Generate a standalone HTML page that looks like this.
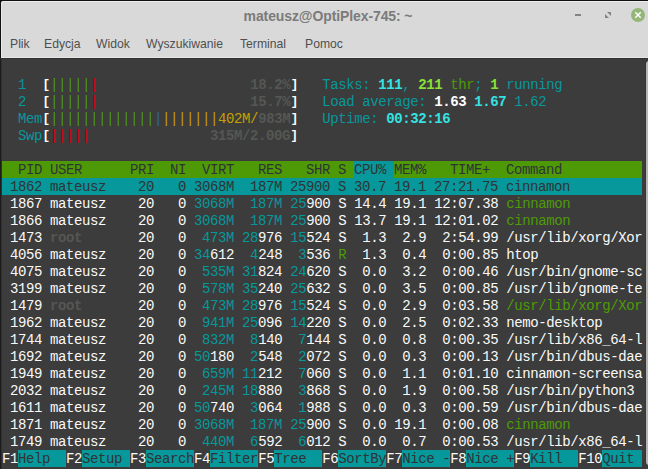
<!DOCTYPE html>
<html><head><meta charset="utf-8"><style>
html,body{margin:0;padding:0;width:648px;height:469px;overflow:hidden;background:#111;}
#win{position:absolute;left:0;top:0;width:648px;height:469px;background:#111;}
#tb{position:absolute;left:1px;top:1px;width:660px;height:57px;background:#d9d9d9;border-top-left-radius:3px;
  box-shadow: inset 1px 0 0 #e8e8e8, inset 0 1px 0 #eeeeee, inset 0 -1px 0 #e6e6e6;}
#title{position:absolute;left:0;top:7px;width:654px;text-align:center;letter-spacing:-0.1px;font:bold 14px "Liberation Sans",sans-serif;color:#7b7b7b;}
.menu{position:absolute;top:37px;font:12.2px "Liberation Sans",sans-serif;color:#4f4f4f;}
#term{position:absolute;left:0px;top:58px;width:660px;height:420px;background:#3c3c3c;border-top:1px solid #313131;box-shadow: inset 1px 0 0 #1c1c1c, inset 2px 0 0 #303030;}
.row{position:absolute;left:2px;height:17px;line-height:17px;white-space:pre;font-family:"Liberation Mono",monospace;font-size:14px;letter-spacing:-0.4px;}
.row span{display:inline-block;height:17px;line-height:19px;vertical-align:top;}
#sb{position:absolute;left:646px;top:61px;width:8px;height:404px;background:#b6b6b6;border-radius:3px;box-shadow:-1px 0 0 #363636;}
#close{position:absolute;left:631px;top:8px;width:14px;height:14px;border-radius:50%;background:#94b677;}
</style></head><body><div id="win">
<div id="tb">
<div id="title">mateusz@OptiPlex-745: ~</div>
</div>
<div class="menu" style="left:10px">Plik</div>
<div class="menu" style="left:44px">Edycja</div>
<div class="menu" style="left:96px">Widok</div>
<div class="menu" style="left:146px">Wyszukiwanie</div>
<div class="menu" style="left:240px">Terminal</div>
<div class="menu" style="left:305px">Pomoc</div>
<div id="min" style="position:absolute;left:575px;top:14px;width:6px;height:2px;background:#838383"></div>
<svg style="position:absolute;left:604px;top:11px" width="8" height="8" viewBox="0 0 8 8"><path d="M3 1H7V5Z" fill="#838383"/><path d="M1 3V7H5Z" fill="#838383"/></svg>
<div id="close"></div>
<svg style="position:absolute;left:631px;top:8px" width="14" height="14" viewBox="0 0 14 14"><path d="M4.3 4.3L9.7 9.7M9.7 4.3L4.3 9.7" stroke="#fff" stroke-width="1.5"/></svg>
<div id="term"></div>
<div class="row" style="top:76px"><span style="color:#fafafa;">  </span><span style="color:#06989a;">1</span><span style="color:#fafafa;">  </span><span style="color:#ffffff;font-weight:bold;font-size:12.5px;letter-spacing:0px;padding-left:0.5px;">[</span><span style="color:#4e9a06;">|||||</span><span style="color:#cc0000;">|</span><span style="color:#fafafa;">                   </span><span style="color:#555753;font-weight:bold;">18.2%</span><span style="color:#ffffff;font-weight:bold;font-size:12.5px;letter-spacing:0px;padding-left:0.5px;">]</span><span style="color:#fafafa;">   </span><span style="color:#06989a;">Tasks: </span><span style="color:#34e2e2;font-weight:bold;">111</span><span style="color:#06989a;">, </span><span style="color:#8ae234;font-weight:bold;">211</span><span style="color:#4e9a06;"> thr</span><span style="color:#06989a;">; </span><span style="color:#8ae234;font-weight:bold;">1</span><span style="color:#06989a;"> running</span></div>
<div class="row" style="top:93px"><span style="color:#fafafa;">  </span><span style="color:#06989a;">2</span><span style="color:#fafafa;">  </span><span style="color:#ffffff;font-weight:bold;font-size:12.5px;letter-spacing:0px;padding-left:0.5px;">[</span><span style="color:#4e9a06;">|||||</span><span style="color:#cc0000;">|</span><span style="color:#fafafa;">                   </span><span style="color:#555753;font-weight:bold;">15.7%</span><span style="color:#ffffff;font-weight:bold;font-size:12.5px;letter-spacing:0px;padding-left:0.5px;">]</span><span style="color:#fafafa;">   </span><span style="color:#06989a;">Load average: </span><span style="color:#ffffff;font-weight:bold;">1.63</span><span style="color:#fafafa;"> </span><span style="color:#34e2e2;font-weight:bold;">1.67</span><span style="color:#fafafa;"> </span><span style="color:#06989a;">1.62</span></div>
<div class="row" style="top:110px"><span style="color:#fafafa;">  </span><span style="color:#06989a;">Mem</span><span style="color:#ffffff;font-weight:bold;font-size:12.5px;letter-spacing:0px;padding-left:0.5px;">[</span><span style="color:#4e9a06;">|||||||||||||</span><span style="color:#3465a4;">|</span><span style="color:#c4a000;">|||||||</span><span style="color:#c4a000;">402M/</span><span style="color:#555753;font-weight:bold;">983M</span><span style="color:#ffffff;font-weight:bold;font-size:12.5px;letter-spacing:0px;padding-left:0.5px;">]</span><span style="color:#fafafa;">   </span><span style="color:#06989a;">Uptime: </span><span style="color:#34e2e2;font-weight:bold;">00:32:16</span></div>
<div class="row" style="top:127px"><span style="color:#fafafa;">  </span><span style="color:#06989a;">Swp</span><span style="color:#ffffff;font-weight:bold;font-size:12.5px;letter-spacing:0px;padding-left:0.5px;">[</span><span style="color:#cc0000;">|||||</span><span style="color:#fafafa;">               </span><span style="color:#555753;font-weight:bold;">315M/2.00G</span><span style="color:#ffffff;font-weight:bold;font-size:12.5px;letter-spacing:0px;padding-left:0.5px;">]</span></div>
<div class="row" style="top:161px"><span class="bgc" style="color:#2e3436;background:#4e9a06;">  PID USER      PRI  NI  VIRT   RES   SHR S </span><span class="bgc" style="color:#2e3436;background:#06989a;">CPU% </span><span class="bgc" style="color:#2e3436;background:#4e9a06;">MEM%   TIME+  Command          </span></div>
<div class="row" style="top:178px"><span class="bgc" style="color:#2e3436;background:#06989a;"> 1862 mateusz    20   0 3068M  187M 25900 S 30.7 19.1 27:21.75 cinnamon         </span></div>
<div class="row" style="top:195px"><span style="color:#fafafa;"> 1867 </span><span style="color:#fafafa;">mateusz  </span><span style="color:#fafafa;">  20   0 </span><span style="color:#fafafa;"></span><span style="color:#06989a;">3068M</span><span style="color:#fafafa;"> </span><span style="color:#fafafa;"> </span><span style="color:#06989a;">187M</span><span style="color:#fafafa;"> </span><span style="color:#fafafa;"></span><span style="color:#06989a;">25</span><span style="color:#fafafa;">900</span><span style="color:#fafafa;"> </span><span style="color:#fafafa;">S</span><span style="color:#fafafa;"> 14.4 19.1 12:07.38 </span><span style="color:#4e9a06;">cinnamon</span></div>
<div class="row" style="top:212px"><span style="color:#fafafa;"> 1866 </span><span style="color:#fafafa;">mateusz  </span><span style="color:#fafafa;">  20   0 </span><span style="color:#fafafa;"></span><span style="color:#06989a;">3068M</span><span style="color:#fafafa;"> </span><span style="color:#fafafa;"> </span><span style="color:#06989a;">187M</span><span style="color:#fafafa;"> </span><span style="color:#fafafa;"></span><span style="color:#06989a;">25</span><span style="color:#fafafa;">900</span><span style="color:#fafafa;"> </span><span style="color:#fafafa;">S</span><span style="color:#fafafa;"> 13.7 19.1 12:01.02 </span><span style="color:#4e9a06;">cinnamon</span></div>
<div class="row" style="top:229px"><span style="color:#fafafa;"> 1473 </span><span style="color:#555753;font-weight:bold;">root     </span><span style="color:#fafafa;">  20   0 </span><span style="color:#fafafa;"> </span><span style="color:#06989a;">473M</span><span style="color:#fafafa;"> </span><span style="color:#fafafa;"></span><span style="color:#06989a;">28</span><span style="color:#fafafa;">976</span><span style="color:#fafafa;"> </span><span style="color:#fafafa;"></span><span style="color:#06989a;">15</span><span style="color:#fafafa;">524</span><span style="color:#fafafa;"> </span><span style="color:#fafafa;">S</span><span style="color:#fafafa;">  1.3  2.9  2:54.99 </span><span style="color:#fafafa;">/usr/lib/xorg/Xor</span></div>
<div class="row" style="top:246px"><span style="color:#fafafa;"> 4056 </span><span style="color:#fafafa;">mateusz  </span><span style="color:#fafafa;">  20   0 </span><span style="color:#fafafa;"></span><span style="color:#06989a;">34</span><span style="color:#fafafa;">612</span><span style="color:#fafafa;"> </span><span style="color:#fafafa;"> </span><span style="color:#06989a;">4</span><span style="color:#fafafa;">248</span><span style="color:#fafafa;"> </span><span style="color:#fafafa;"> </span><span style="color:#06989a;">3</span><span style="color:#fafafa;">536</span><span style="color:#fafafa;"> </span><span style="color:#4e9a06;">R</span><span style="color:#fafafa;">  1.3  0.4  0:00.85 </span><span style="color:#fafafa;">htop</span></div>
<div class="row" style="top:263px"><span style="color:#fafafa;"> 4075 </span><span style="color:#fafafa;">mateusz  </span><span style="color:#fafafa;">  20   0 </span><span style="color:#fafafa;"> </span><span style="color:#06989a;">535M</span><span style="color:#fafafa;"> </span><span style="color:#fafafa;"></span><span style="color:#06989a;">31</span><span style="color:#fafafa;">824</span><span style="color:#fafafa;"> </span><span style="color:#fafafa;"></span><span style="color:#06989a;">24</span><span style="color:#fafafa;">620</span><span style="color:#fafafa;"> </span><span style="color:#fafafa;">S</span><span style="color:#fafafa;">  0.0  3.2  0:00.46 </span><span style="color:#fafafa;">/usr/bin/gnome-sc</span></div>
<div class="row" style="top:280px"><span style="color:#fafafa;"> 3199 </span><span style="color:#fafafa;">mateusz  </span><span style="color:#fafafa;">  20   0 </span><span style="color:#fafafa;"> </span><span style="color:#06989a;">578M</span><span style="color:#fafafa;"> </span><span style="color:#fafafa;"></span><span style="color:#06989a;">35</span><span style="color:#fafafa;">240</span><span style="color:#fafafa;"> </span><span style="color:#fafafa;"></span><span style="color:#06989a;">25</span><span style="color:#fafafa;">632</span><span style="color:#fafafa;"> </span><span style="color:#fafafa;">S</span><span style="color:#fafafa;">  0.0  3.5  0:00.85 </span><span style="color:#fafafa;">/usr/lib/gnome-te</span></div>
<div class="row" style="top:297px"><span style="color:#fafafa;"> 1479 </span><span style="color:#555753;font-weight:bold;">root     </span><span style="color:#fafafa;">  20   0 </span><span style="color:#fafafa;"> </span><span style="color:#06989a;">473M</span><span style="color:#fafafa;"> </span><span style="color:#fafafa;"></span><span style="color:#06989a;">28</span><span style="color:#fafafa;">976</span><span style="color:#fafafa;"> </span><span style="color:#fafafa;"></span><span style="color:#06989a;">15</span><span style="color:#fafafa;">524</span><span style="color:#fafafa;"> </span><span style="color:#fafafa;">S</span><span style="color:#fafafa;">  0.0  2.9  0:03.58 </span><span style="color:#4e9a06;">/usr/lib/xorg/Xor</span></div>
<div class="row" style="top:314px"><span style="color:#fafafa;"> 1962 </span><span style="color:#fafafa;">mateusz  </span><span style="color:#fafafa;">  20   0 </span><span style="color:#fafafa;"> </span><span style="color:#06989a;">941M</span><span style="color:#fafafa;"> </span><span style="color:#fafafa;"></span><span style="color:#06989a;">25</span><span style="color:#fafafa;">096</span><span style="color:#fafafa;"> </span><span style="color:#fafafa;"></span><span style="color:#06989a;">14</span><span style="color:#fafafa;">220</span><span style="color:#fafafa;"> </span><span style="color:#fafafa;">S</span><span style="color:#fafafa;">  0.0  2.5  0:02.33 </span><span style="color:#fafafa;">nemo-desktop</span></div>
<div class="row" style="top:331px"><span style="color:#fafafa;"> 1744 </span><span style="color:#fafafa;">mateusz  </span><span style="color:#fafafa;">  20   0 </span><span style="color:#fafafa;"> </span><span style="color:#06989a;">832M</span><span style="color:#fafafa;"> </span><span style="color:#fafafa;"> </span><span style="color:#06989a;">8</span><span style="color:#fafafa;">140</span><span style="color:#fafafa;"> </span><span style="color:#fafafa;"> </span><span style="color:#06989a;">7</span><span style="color:#fafafa;">144</span><span style="color:#fafafa;"> </span><span style="color:#fafafa;">S</span><span style="color:#fafafa;">  0.0  0.8  0:00.35 </span><span style="color:#fafafa;">/usr/lib/x86_64-l</span></div>
<div class="row" style="top:348px"><span style="color:#fafafa;"> 1692 </span><span style="color:#fafafa;">mateusz  </span><span style="color:#fafafa;">  20   0 </span><span style="color:#fafafa;"></span><span style="color:#06989a;">50</span><span style="color:#fafafa;">180</span><span style="color:#fafafa;"> </span><span style="color:#fafafa;"> </span><span style="color:#06989a;">2</span><span style="color:#fafafa;">548</span><span style="color:#fafafa;"> </span><span style="color:#fafafa;"> </span><span style="color:#06989a;">2</span><span style="color:#fafafa;">072</span><span style="color:#fafafa;"> </span><span style="color:#fafafa;">S</span><span style="color:#fafafa;">  0.0  0.3  0:00.13 </span><span style="color:#fafafa;">/usr/bin/dbus-dae</span></div>
<div class="row" style="top:365px"><span style="color:#fafafa;"> 1949 </span><span style="color:#fafafa;">mateusz  </span><span style="color:#fafafa;">  20   0 </span><span style="color:#fafafa;"> </span><span style="color:#06989a;">659M</span><span style="color:#fafafa;"> </span><span style="color:#fafafa;"></span><span style="color:#06989a;">11</span><span style="color:#fafafa;">212</span><span style="color:#fafafa;"> </span><span style="color:#fafafa;"> </span><span style="color:#06989a;">7</span><span style="color:#fafafa;">060</span><span style="color:#fafafa;"> </span><span style="color:#fafafa;">S</span><span style="color:#fafafa;">  0.0  1.1  0:01.10 </span><span style="color:#fafafa;">cinnamon-screensa</span></div>
<div class="row" style="top:382px"><span style="color:#fafafa;"> 2032 </span><span style="color:#fafafa;">mateusz  </span><span style="color:#fafafa;">  20   0 </span><span style="color:#fafafa;"> </span><span style="color:#06989a;">245M</span><span style="color:#fafafa;"> </span><span style="color:#fafafa;"></span><span style="color:#06989a;">18</span><span style="color:#fafafa;">880</span><span style="color:#fafafa;"> </span><span style="color:#fafafa;"> </span><span style="color:#06989a;">3</span><span style="color:#fafafa;">868</span><span style="color:#fafafa;"> </span><span style="color:#fafafa;">S</span><span style="color:#fafafa;">  0.0  1.9  0:00.58 </span><span style="color:#fafafa;">/usr/bin/python3</span></div>
<div class="row" style="top:399px"><span style="color:#fafafa;"> 1611 </span><span style="color:#fafafa;">mateusz  </span><span style="color:#fafafa;">  20   0 </span><span style="color:#fafafa;"></span><span style="color:#06989a;">50</span><span style="color:#fafafa;">740</span><span style="color:#fafafa;"> </span><span style="color:#fafafa;"> </span><span style="color:#06989a;">3</span><span style="color:#fafafa;">064</span><span style="color:#fafafa;"> </span><span style="color:#fafafa;"> </span><span style="color:#06989a;">1</span><span style="color:#fafafa;">988</span><span style="color:#fafafa;"> </span><span style="color:#fafafa;">S</span><span style="color:#fafafa;">  0.0  0.3  0:00.59 </span><span style="color:#fafafa;">/usr/bin/dbus-dae</span></div>
<div class="row" style="top:416px"><span style="color:#fafafa;"> 1871 </span><span style="color:#fafafa;">mateusz  </span><span style="color:#fafafa;">  20   0 </span><span style="color:#fafafa;"></span><span style="color:#06989a;">3068M</span><span style="color:#fafafa;"> </span><span style="color:#fafafa;"> </span><span style="color:#06989a;">187M</span><span style="color:#fafafa;"> </span><span style="color:#fafafa;"></span><span style="color:#06989a;">25</span><span style="color:#fafafa;">900</span><span style="color:#fafafa;"> </span><span style="color:#fafafa;">S</span><span style="color:#fafafa;">  0.0 19.1  0:00.08 </span><span style="color:#4e9a06;">cinnamon</span></div>
<div class="row" style="top:433px"><span style="color:#fafafa;"> 1749 </span><span style="color:#fafafa;">mateusz  </span><span style="color:#fafafa;">  20   0 </span><span style="color:#fafafa;"> </span><span style="color:#06989a;">440M</span><span style="color:#fafafa;"> </span><span style="color:#fafafa;"> </span><span style="color:#06989a;">6</span><span style="color:#fafafa;">592</span><span style="color:#fafafa;"> </span><span style="color:#fafafa;"> </span><span style="color:#06989a;">6</span><span style="color:#fafafa;">012</span><span style="color:#fafafa;"> </span><span style="color:#fafafa;">S</span><span style="color:#fafafa;">  0.0  0.7  0:00.53 </span><span style="color:#fafafa;">/usr/lib/x86_64-l</span></div>
<div class="row" style="top:450px"><span style="color:#fafafa;">F1</span><span class="bgc" style="color:#2e3436;background:#06989a;">Help  </span><span style="color:#fafafa;">F2</span><span class="bgc" style="color:#2e3436;background:#06989a;">Setup </span><span style="color:#fafafa;">F3</span><span class="bgc" style="color:#2e3436;background:#06989a;">Search</span><span style="color:#fafafa;">F4</span><span class="bgc" style="color:#2e3436;background:#06989a;">Filter</span><span style="color:#fafafa;">F5</span><span class="bgc" style="color:#2e3436;background:#06989a;">Tree  </span><span style="color:#fafafa;">F6</span><span class="bgc" style="color:#2e3436;background:#06989a;">SortBy</span><span style="color:#fafafa;">F7</span><span class="bgc" style="color:#2e3436;background:#06989a;">Nice -</span><span style="color:#fafafa;">F8</span><span class="bgc" style="color:#2e3436;background:#06989a;">Nice +</span><span style="color:#fafafa;">F9</span><span class="bgc" style="color:#2e3436;background:#06989a;">Kill  </span><span style="color:#fafafa;">F10</span><span class="bgc" style="color:#2e3436;background:#06989a;">Quit </span></div>
<div id="sb"></div>
</div></body></html>
